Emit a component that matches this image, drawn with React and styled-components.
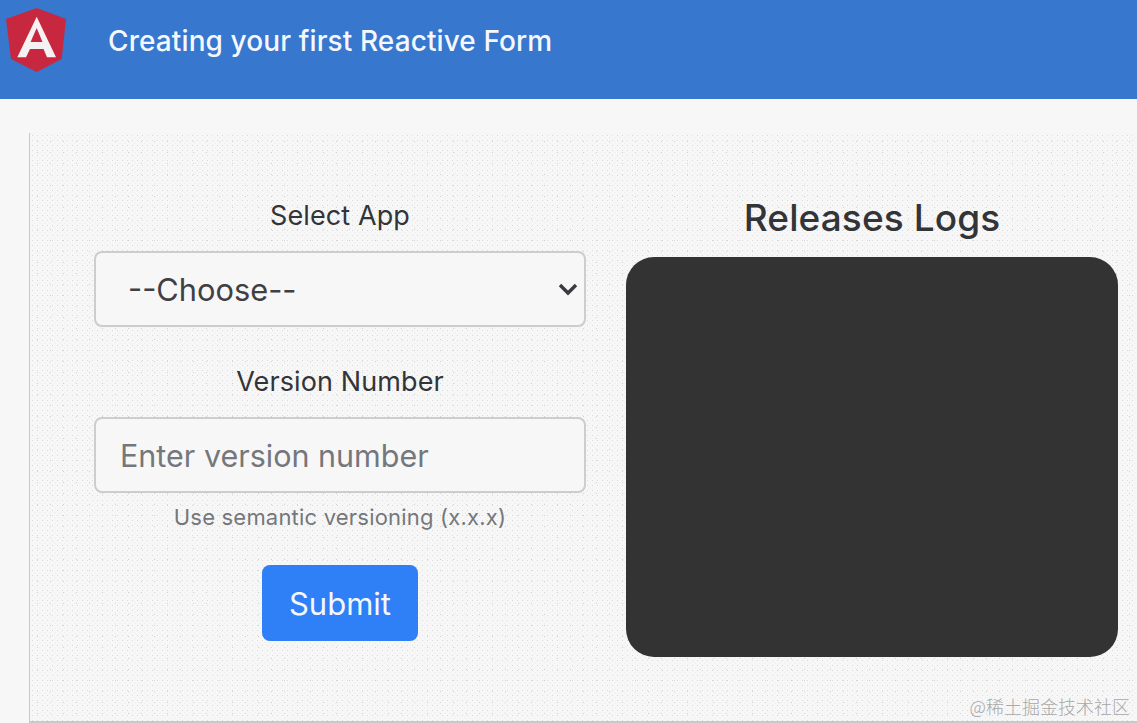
import styled, { createGlobalStyle } from "styled-components";

const GlobalStyle = createGlobalStyle`
  html, body {
    margin: 0;
    height: 100%;
    overflow: hidden;
    background: #f8f7f8;
    font-family: Inter, "Liberation Sans", sans-serif;
    color: #333437;
  }
  * {
    box-sizing: border-box;
  }
`;

const Header = styled.header`
  height: 99px;
  padding: 8px 0 27px 6px;
  display: flex;
  align-items: center;
  gap: 42px;
  background: #3777cd;
`;

const Logo = styled.svg`
  width: 60px;
  height: 64px;
  flex: none;
`;

const Title = styled.h1`
  margin: 0;
  padding-top: 2px;
  font-size: 28px;
  font-weight: 500;
  letter-spacing: 0.1px;
  color: #f4f8fd;
`;

const Main = styled.main`
  padding: 34px 0 0 29px;
`;

const Panel = styled.section`
  position: relative;
  height: 590px;
  padding: 64px 19px 0 64px;
  display: grid;
  grid-template-columns: 492px 492px;
  column-gap: 40px;
  align-items: start;
  border-left: 1px solid #c9c9c9;
  border-bottom: 2px solid #c9c9c9;
  background-color: #f8f7f8;
  background-image: radial-gradient(#dadada 0.6px, transparent 0.9px),
    radial-gradient(#e8e8e8 0.6px, transparent 0.9px),
    radial-gradient(#d0d0d0 0.6px, transparent 0.9px);
  background-size: 5px 5px, 5px 5px, 13px 11px;
  background-position: 0 0, 2.5px 2.5px, 1px 3px;
`;

const FormColumn = styled.form`
  display: flex;
  flex-direction: column;
  align-items: center;
`;

const Label = styled.label`
  margin: 1px 0 17px;
  font-size: 27px;
  line-height: 36px;
  letter-spacing: 0.1px;
  text-align: center;
`;

const SelectWrap = styled.div`
  position: relative;
  width: 100%;
  margin-bottom: 36px;
`;

const Select = styled.select`
  display: block;
  width: 100%;
  height: 76px;
  padding: 0 32px;
  appearance: none;
  border: 2px solid #cdcdcd;
  border-radius: 8px;
  background: #f8f7f8;
  font: inherit;
  font-size: 30.8px;
  color: #3f4043;
`;

const Chevron = styled.svg`
  position: absolute;
  top: 31px;
  right: 8px;
  width: 20px;
  height: 14px;
  pointer-events: none;
`;

const Input = styled.input`
  display: block;
  width: 100%;
  height: 76px;
  padding: 0 24px;
  border: 2px solid #cdcdcd;
  border-radius: 8px;
  background: #f8f7f8;
  font: inherit;
  font-size: 30.5px;
  color: #3f4043;

  &::placeholder {
    color: #74777b;
    opacity: 1;
  }
`;

const Help = styled.small`
  margin-top: 9px;
  font-size: 22px;
  line-height: 30px;
  letter-spacing: 0.2px;
  color: #74777b;
`;

const Submit = styled.button`
  width: 156px;
  height: 76px;
  margin-top: 33px;
  border: 0;
  border-radius: 8px;
  background: #2f80f6;
  font: inherit;
  font-size: 31px;
  color: #f4f8fd;
`;

const LogColumn = styled.div`
  display: flex;
  flex-direction: column;
  align-items: center;
`;

const LogTitle = styled.h2`
  margin: 0 0 19px;
  font-size: 37px;
  line-height: 41px;
  font-weight: 500;
  letter-spacing: 0.1px;
  color: #333437;
`;

const LogBox = styled.div`
  width: 100%;
  height: 400px;
  border-radius: 28px;
  background: #333333;
`;

const Watermark = styled.span`
  position: absolute;
  right: 7px;
  bottom: 2px;
  font-family: "Noto Sans CJK SC", sans-serif;
  font-size: 18px;
  font-weight: 300;
  color: #a8a8a8;
`;

export default function App() {
  return (
    <>
      <GlobalStyle />
      <Header>
        <Logo viewBox="0 0 60 64" aria-hidden="true">
          <path
            fill="#c8283f"
            d="M30.7 0 0 11 5 51 30.7 64 55.7 51 60 11Z"
          />
          <path
            fill="#f6f1f2"
            fillRule="evenodd"
            d="M30.7 8.7 11.3 49.3H20L24 41H37.5L41 49.3H50ZM30.7 20 24.6 34H36.5Z"
          />
        </Logo>
        <Title>Creating your first Reactive Form</Title>
      </Header>
      <Main>
        <Panel>
          <FormColumn>
            <Label htmlFor="app">Select App</Label>
            <SelectWrap>
              <Select id="app" defaultValue="">
                <option value="">--Choose--</option>
              </Select>
              <Chevron viewBox="0 0 20 14" aria-hidden="true">
                <path
                  d="M2 3 10 11 18 3"
                  fill="none"
                  stroke="#3a3b3e"
                  strokeWidth="3.4"
                />
              </Chevron>
            </SelectWrap>
            <Label htmlFor="version">Version Number</Label>
            <Input id="version" placeholder="Enter version number" />
            <Help>Use semantic versioning (x.x.x)</Help>
            <Submit type="button">Submit</Submit>
          </FormColumn>
          <LogColumn>
            <LogTitle>Releases Logs</LogTitle>
            <LogBox />
          </LogColumn>
          <Watermark>@稀土掘金技术社区</Watermark>
        </Panel>
      </Main>
    </>
  );
}
